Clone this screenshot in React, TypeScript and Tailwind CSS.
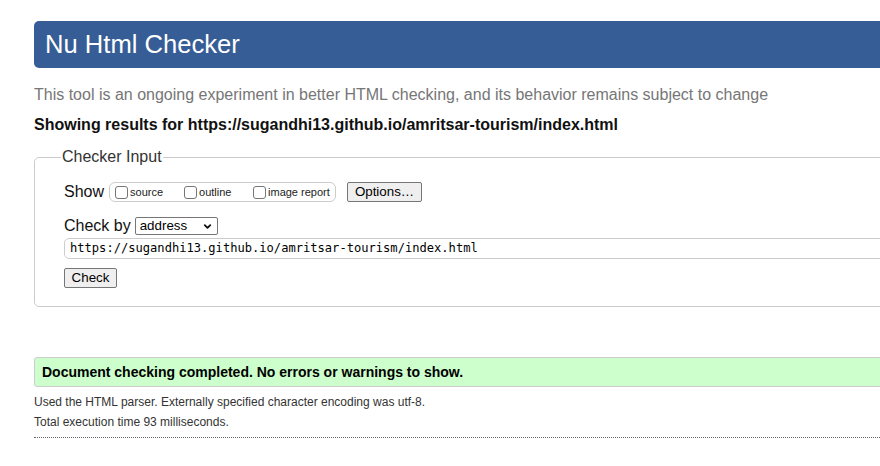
import { ChevronDown } from 'lucide-react';

function Box({ label, className }: { label: string; className?: string }) {
  return (
    <label className={`flex items-center ${className ?? ''}`}>
      <span className="w-[13px] h-[13px] border border-[#767676] rounded-[3px] bg-white mr-[2px]" />
      <span className="text-[11px] text-[#222]">{label}</span>
    </label>
  );
}

export default function App() {
  return (
    <div className="w-[880px] h-[466px] overflow-hidden bg-white font-['Liberation_Sans',Arial,sans-serif] text-[#111]">
      <div className="ml-[34px] w-[1000px] pt-[21px]">
        {/* header */}
        <div className="h-[47px] bg-[#365d95] rounded-l-[5px] flex items-center pl-[11px]">
          <h1 className="text-[25.6px] text-white leading-none">Nu Html Checker</h1>
        </div>

        <p className="mt-[18px] text-[16px] text-[#767676] leading-[18px]">
          This tool is an ongoing experiment in better HTML checking, and its behavior remains subject to change
        </p>
        <p className="mt-[12px] text-[16px] font-bold leading-[18px]">
          Showing results for https://sugandhi13.github.io/amritsar-tourism/index.html
        </p>

        {/* checker input */}
        <fieldset className="mt-[11px] border border-[#cccccc] rounded-[5px] h-[162px] pl-[29px] pt-[8px]">
          <legend className="text-[16px] text-[#333] px-[1px] -ml-[3px]">Checker Input</legend>

          <div className="flex items-center h-[20px] mt-[5px]">
            <span className="text-[16px] mr-[5px]">Show</span>
            <div className="flex items-center h-[20px] w-[227px] border border-[#cccccc] rounded-[6px] pl-[5px]">
              <Box label="source" className="w-[69px]" />
              <Box label="outline" className="w-[69px]" />
              <Box label="image report" />
            </div>
            <button className="ml-[11px] h-[20px] w-[75px] border border-[#767676] rounded-[2px] bg-[#efefef] text-[13.33px] leading-none text-black">
              Options…
            </button>
          </div>

          <div className="flex items-center mt-[14px] h-[19px]">
            <span className="text-[16px] mr-[4px]">Check by</span>
            <div className="relative w-[83px] h-[18px] border border-[#767676] rounded-[2px] flex items-center pl-[4px]">
              <span className="text-[13.33px] leading-none text-black">address</span>
              <ChevronDown className="absolute right-[4px] top-[3px] w-[11px] h-[11px]" strokeWidth={4} />
            </div>
          </div>

          <div className="mt-[3px] h-[21px] border border-[#cccccc] rounded-[5px] flex items-center pl-[5px]">
            <span className="font-['DejaVu_Sans_Mono',Consolas,monospace] text-[12.1px] text-black">
              https://sugandhi13.github.io/amritsar-tourism/index.html
            </span>
          </div>

          <button className="mt-[9px] h-[20px] w-[53px] border border-[#767676] rounded-[2px] bg-[#efefef] text-[13.33px] leading-none text-black">
            Check
          </button>
        </fieldset>

        {/* result */}
        <div className="mt-[50px] h-[30px] bg-[#ccffcc] border border-[#cccccc] rounded-l-[3px] flex items-center pl-[7px]">
          <span className="text-[14px] font-bold text-black">
            Document checking completed. No errors or warnings to show.
          </span>
        </div>
        <p className="mt-[8px] text-[12px] text-[#333] leading-[14px]">
          Used the HTML parser. Externally specified character encoding was utf-8.
        </p>
        <p className="mt-[6px] text-[12px] text-[#333] leading-[14px]">
          Total execution time 93 milliseconds.
        </p>
        <div className="mt-[8px] border-t border-dotted border-[#666]" />
      </div>
    </div>
  );
}
